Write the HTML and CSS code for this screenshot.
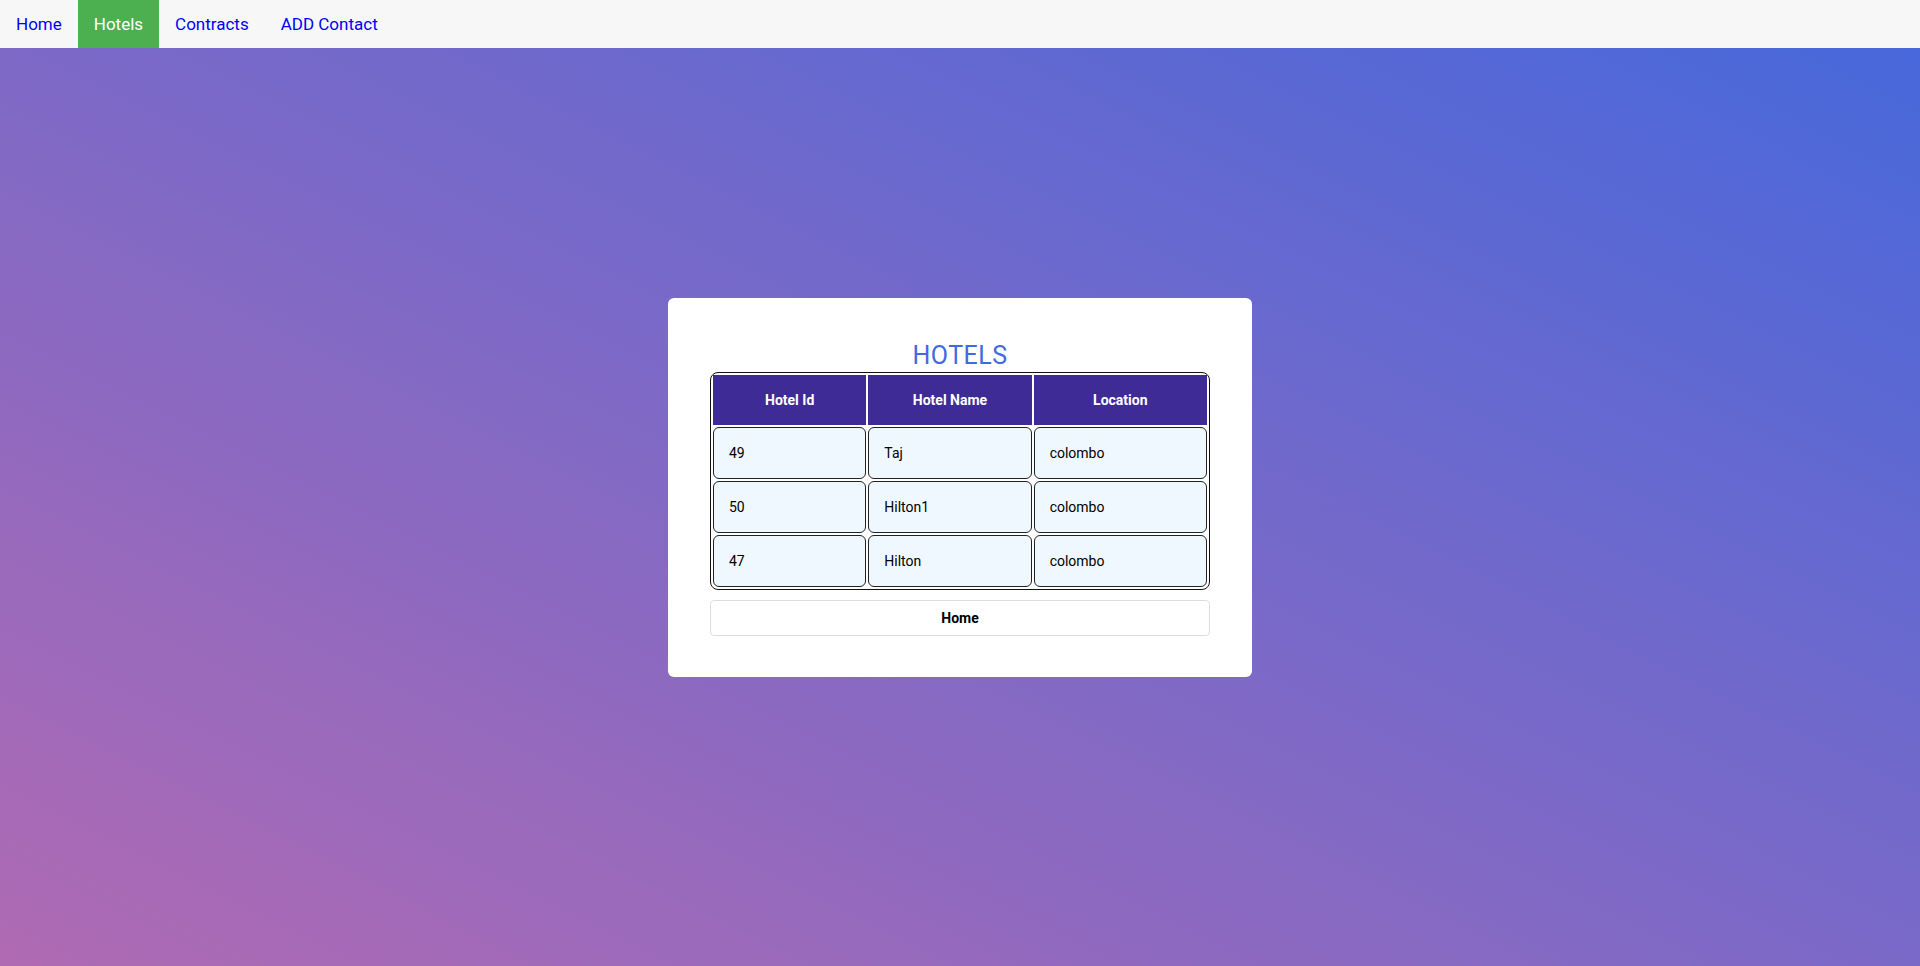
FILE: index.html
```html
<!DOCTYPE html>
<html>
<head>
<meta charset="utf-8">
<title>Hotels</title>
<link rel="stylesheet" href="styles.css">
</head>
<body>
<nav class="topnav">
  <a class="nav-link" href="#">Home</a>
  <a class="nav-link active" href="#">Hotels</a>
  <a class="nav-link" href="#">Contracts</a>
  <a class="nav-link" href="#">ADD Contact</a>
</nav>
<main class="page">
  <section class="card">
    <h2 class="title">HOTELS</h2>
    <table class="hotels">
      <thead>
        <tr>
          <th class="c1">Hotel Id</th>
          <th class="c2">Hotel Name</th>
          <th class="c3">Location</th>
        </tr>
      </thead>
      <tbody>
        <tr><td>49</td><td>Taj</td><td>colombo</td></tr>
        <tr><td>50</td><td>Hilton1</td><td>colombo</td></tr>
        <tr><td>47</td><td>Hilton</td><td>colombo</td></tr>
      </tbody>
    </table>
    <button class="home-btn">Home</button>
  </section>
</main>
</body>
</html>
```
FILE: styles.css
```css
html, body {
  margin: 0;
  padding: 0;
}
body {
  min-height: 966px;
  font-family: Roboto, "Liberation Sans", Arial, sans-serif;
  background: linear-gradient(to top right, #b06ab3, #4568dc);
}
.topnav {
  display: flex;
  background: #f7f7f7;
  height: 48px;
}
.nav-link {
  display: block;
  padding: 14px 16px;
  font-size: 17px;
  line-height: 20px;
  color: #0000ff;
  text-decoration: none;
}
.nav-link.active {
  background: #4caf50;
  color: #ffffff;
}
.page {
  display: flex;
  justify-content: center;
  padding-top: 250px;
}
.card {
  width: 500px;
  background: #ffffff;
  border-radius: 6px;
  padding: 44px 42px 41px;
}
.title {
  margin: 0 0 2px;
  text-align: center;
  font-size: 25px;
  font-weight: 400;
  line-height: 28px;
  letter-spacing: 0.5px;
  color: #4169e1;
}
.hotels {
  width: 500px;
  border: 1px solid #111;
  border-radius: 8px;
  border-spacing: 2px;
  font-size: 14px;
}
.hotels th {
  background: #3f2b96;
  color: #ffffff;
  font-weight: 700;
  height: 50px;
  padding: 0;
  text-align: center;
}
.hotels .c1 { width: 153px; }
.hotels .c2 { width: 163px; }
.hotels .c3 { width: 173px; }
.hotels td {
  background: #f0f8ff;
  color: #000;
  border: 1px solid #222;
  border-radius: 6px;
  padding: 0 0 0 15px;
  box-sizing: border-box;
  height: 52px;
}
.home-btn {
  display: block;
  width: 100%;
  height: 36px;
  margin-top: 10px;
  background: #ffffff;
  border: 1px solid #ddd;
  border-radius: 4px;
  font-family: Roboto, "Liberation Sans", Arial, sans-serif;
  font-size: 14px;
  font-weight: 700;
  color: #000;
}
```
